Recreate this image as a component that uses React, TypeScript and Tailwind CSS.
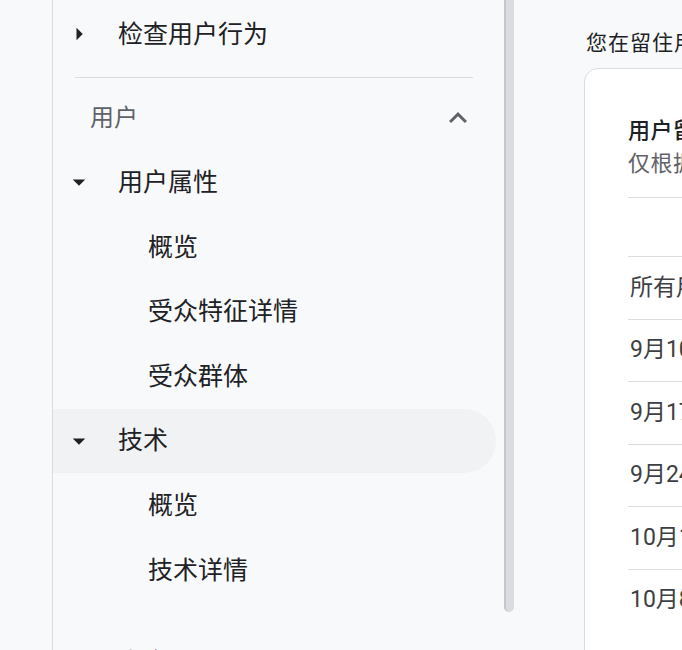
import React from "react";

const font = { fontFamily: '"Roboto", "Noto Sans CJK SC", sans-serif' };

function ArrowRight() {
  return (
    <svg viewBox="0 0 24 24" className="w-[30px] h-[30px] shrink-0 fill-[#202124]">
      <path d="M10 17l5-5-5-5v10z" />
    </svg>
  );
}

function ArrowDown() {
  return (
    <svg viewBox="0 0 24 24" className="w-[30px] h-[30px] shrink-0 fill-[#202124]">
      <path d="M7 10l5 5 5-5z" />
    </svg>
  );
}

function ExpandLess() {
  return (
    <svg viewBox="0 0 24 24" className="w-[36px] h-[36px] fill-[#5f6368]">
      <path d="M12 8l-6 6 1.41 1.41L12 10.83l4.59 4.58L18 14z" />
    </svg>
  );
}

interface NavRow {
  label: string;
  kind: "open" | "sub";
  active?: boolean;
}

const rows: NavRow[] = [
  { label: "用户属性", kind: "open" },
  { label: "概览", kind: "sub" },
  { label: "受众特征详情", kind: "sub" },
  { label: "受众群体", kind: "sub" },
  { label: "技术", kind: "open", active: true },
  { label: "概览", kind: "sub" },
  { label: "技术详情", kind: "sub" },
];

const tableRows = [
  "所有用户",
  "9月10日 - 9月16日",
  "9月17日 - 9月23日",
  "9月24日 - 9月30日",
  "10月1日 - 10月7日",
  "10月8日 - 10月14日",
];

export default function App() {
  return (
    <div
      className="flex w-[682px] h-[650px] overflow-hidden bg-[#f8f9fb] text-[#202124]"
      style={font}
    >
      <div className="w-[52px] shrink-0" />

      {/* sidebar */}
      <div className="flex shrink-0 border-l border-[#dadce0]">
        <nav className="w-[443px] pt-[2px]">
          <div className="h-[64.6px] flex items-center pl-[11px]">
            <ArrowRight />
            <span className="ml-[24px] text-[25px] leading-none">检查用户行为</span>
          </div>
          <div className="ml-[22px] mr-[23px] mt-[10px] border-t border-[#dadce0]" />
          <div className="h-[64.6px] mt-[8px] flex items-center justify-between pl-[37px] pr-[20px]">
            <span className="text-[24px] leading-none text-[#5f6368]">用户</span>
            <ExpandLess />
          </div>
          {rows.map((r, i) => (
            <div
              key={i}
              className={`h-[64.6px] flex items-center pl-[11px] ${
                r.active ? "bg-[#f1f2f4] rounded-r-full" : ""
              }`}
            >
              {r.kind === "open" ? (
                <>
                  <ArrowDown />
                  <span className="ml-[24px] text-[25px] leading-none">{r.label}</span>
                </>
              ) : (
                <span className="ml-[84px] text-[25px] leading-none">{r.label}</span>
              )}
            </div>
          ))}
          <div className="h-[64.6px] mt-[28px] flex items-center pl-[11px]">
            <ArrowRight />
            <span className="ml-[24px] text-[25px] leading-none">生命周期</span>
          </div>
        </nav>
        <div className="w-[8px]" />
        <div className="w-[10px] h-[612px] bg-[#dadce0] border-l-2 border-[#c4c7cc] rounded-b-[5px]" />
        <div className="w-[1px]" />
      </div>

      {/* main */}
      <main className="flex-1 min-w-0 pl-[69px]">
        <h2 className="mt-[31px] ml-[2px] text-[21px] leading-[24px] tracking-[1px] whitespace-nowrap">
          您在留住用户方面表现如何？
        </h2>
        <div className="mt-[13px] w-[600px] h-[620px] bg-white border border-[#dadce0] rounded-[14px] pl-[43px] pt-[49px]">
          <div className="text-[22px] leading-[26px] font-medium tracking-[0.5px] whitespace-nowrap">
            用户留存率
          </div>
          <div className="mt-[7px] text-[22px] leading-[26px] tracking-[0.5px] text-[#5f6368] whitespace-nowrap">
            仅根据新用户计算
          </div>
          <div className="mt-[20px] border-t border-[#dadce0] h-[59px]" />
          {tableRows.map((t) => (
            <div
              key={t}
              className="h-[62.5px] flex items-center pl-[2px] border-t border-[#dadce0] text-[23px] text-[#3c4043] whitespace-nowrap"
            >
              {t}
            </div>
          ))}
        </div>
      </main>
    </div>
  );
}
